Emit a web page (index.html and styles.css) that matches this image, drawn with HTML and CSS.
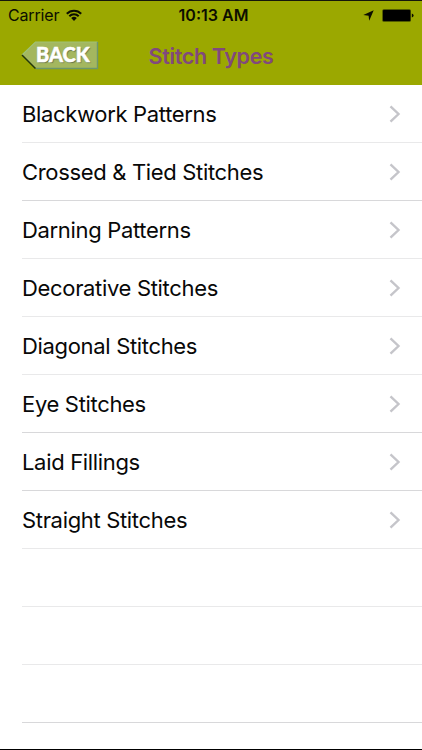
FILE: index.html
```html
<!DOCTYPE html>
<html lang="en">
<head>
    <meta charset="UTF-8">
    <meta name="viewport" content="width=device-width, initial-scale=1.0">
    <title>Stitch Types</title>
    <link rel="stylesheet" href="styles.css">
</head>
<body>
    <header>
        <div class="status-bar">
            <div class="status-left">
                <span class="carrier">Carrier</span>
                <svg class="wifi" width="16" height="13" viewBox="0 0 16 13">
                    <path d="M0.8 4.7A10 10 0 0 1 15.2 4.7M3.3 7.3A6.6 6.6 0 0 1 12.7 7.3" fill="none" stroke="#0c0e00" stroke-width="2"/>
                    <path d="M5.2 9.1A4.2 4.2 0 0 1 10.8 9.1L8 12Z" fill="#0c0e00"/>
                </svg>
            </div>
            <span class="time">10:13 AM</span>
            <div class="status-right">
                <svg class="location" width="11" height="11" viewBox="0 0 11 11">
                    <path d="M10.7 0.3L6.2 10.8L5.6 5.7L0.3 5Z" fill="#0c0e00"/>
                </svg>
                <svg class="battery" width="32" height="13" viewBox="0 0 32 13">
                    <rect x="0.3" y="0.3" width="28.6" height="12.4" rx="1.5" fill="#3d4400"/>
                    <rect x="1" y="1" width="27.2" height="11" rx="0.8" fill="#000"/>
                    <path d="M29.8 4.6Q31.6 5 31.6 6.5Q31.6 8 29.8 8.4Z" fill="#0c0e00"/>
                </svg>
            </div>
        </div>
        <div class="nav-bar">
            <a class="back" href="#">
                <svg width="78" height="29" viewBox="0 0 78 29">
                    <path d="M1 14L14.5 1H76.5V27.5H14.5Z" fill="#a4b75f"/>
                    <path d="M1 14L14.5 1H76.5" fill="none" stroke="#9fc277" stroke-width="1.2"/>
                    <path d="M76.5 1V27.5H14.5" fill="none" stroke="#6d966c" stroke-width="1.4"/>
                    <path d="M1 14L14.5 27.5" fill="none" stroke="#24380c" stroke-width="1.5"/>
                </svg>
                <span>BACK</span>
            </a>
            <h1>Stitch Types</h1>
        </div>
    </header>
    <ul class="stitch-list">
        <li>Blackwork Patterns<svg width="12" height="18" viewBox="0 0 12 18"><path d="M1.5 1.3L9.5 9L1.5 16.7"/></svg></li>
        <li class="dark">Crossed &amp; Tied Stitches<svg width="12" height="18" viewBox="0 0 12 18"><path d="M1.5 1.3L9.5 9L1.5 16.7"/></svg></li>
        <li>Darning Patterns<svg width="12" height="18" viewBox="0 0 12 18"><path d="M1.5 1.3L9.5 9L1.5 16.7"/></svg></li>
        <li>Decorative Stitches<svg width="12" height="18" viewBox="0 0 12 18"><path d="M1.5 1.3L9.5 9L1.5 16.7"/></svg></li>
        <li>Diagonal Stitches<svg width="12" height="18" viewBox="0 0 12 18"><path d="M1.5 1.3L9.5 9L1.5 16.7"/></svg></li>
        <li class="dark">Eye Stitches<svg width="12" height="18" viewBox="0 0 12 18"><path d="M1.5 1.3L9.5 9L1.5 16.7"/></svg></li>
        <li class="dark">Laid Fillings<svg width="12" height="18" viewBox="0 0 12 18"><path d="M1.5 1.3L9.5 9L1.5 16.7"/></svg></li>
        <li>Straight Stitches<svg width="12" height="18" viewBox="0 0 12 18"><path d="M1.5 1.3L9.5 9L1.5 16.7"/></svg></li>
        <li></li>
        <li></li>
        <li class="dark"></li>
    </ul>
</body>
</html>
```
FILE: styles.css
```css
* {
    box-sizing: border-box;
}
body {
    margin: 0;
    height: 750px;
    overflow: hidden;
    display: flex;
    flex-direction: column;
    font-family: Inter, "Liberation Sans", sans-serif;
    background-color: #fff;
    color: #080808;
    border-top: 1px solid #15170a;
    border-bottom: 1px solid #000;
}
header {
    height: 84px;
    flex: none;
    background-color: #9ba800;
}
.status-bar {
    height: 27px;
    display: grid;
    grid-template-columns: 1fr auto 1fr;
    align-items: center;
    padding: 0 8px;
    color: #0c0e00;
    font-size: 16px;
    line-height: 27px;
}
.status-left,
.status-right {
    display: flex;
    align-items: center;
}
.carrier {
    letter-spacing: -0.15px;
    padding-top: 1px;
}
.status-right {
    justify-content: flex-end;
}
.wifi {
    margin-left: 7px;
}
.time {
    font-weight: 600;
    padding: 1px 0 0 5px;
}
.location {
    margin-right: 8px;
}
.nav-bar {
    display: grid;
    grid-template-columns: 1fr auto 1fr;
    align-items: center;
    height: 57px;
    padding: 0 21px;
}
.back {
    position: relative;
    width: 78px;
    height: 29px;
    margin-bottom: 2px;
    text-decoration: none;
}
.back svg {
    display: block;
}
.back span {
    position: absolute;
    left: 15px;
    top: 0;
    font-family: Lato, sans-serif;
    font-weight: 900;
    font-size: 20px;
    line-height: 26px;
    color: #fff;
    -webkit-text-stroke: 0.5px #fff;
    text-shadow: 1px 1px 1px #66754a;
}
h1 {
    margin: 0 0 2px;
    font-size: 21.5px;
    font-weight: 600;
    line-height: 26px;
    letter-spacing: -0.35px;
    color: #81497d;
}
.stitch-list {
    list-style: none;
    margin: 0;
    padding: 0 0 0 22px;
}
.stitch-list li {
    display: flex;
    align-items: center;
    justify-content: space-between;
    height: 58px;
    padding-right: 21px;
    border-bottom: 1px solid #e9e9ea;
    font-size: 22px;
    line-height: 28px;
    letter-spacing: -0.33px;
}
.stitch-list li.dark {
    border-bottom-color: #d8d8da;
}
.stitch-list path {
    fill: none;
    stroke: #c5c5ca;
    stroke-width: 2.4;
}
```
